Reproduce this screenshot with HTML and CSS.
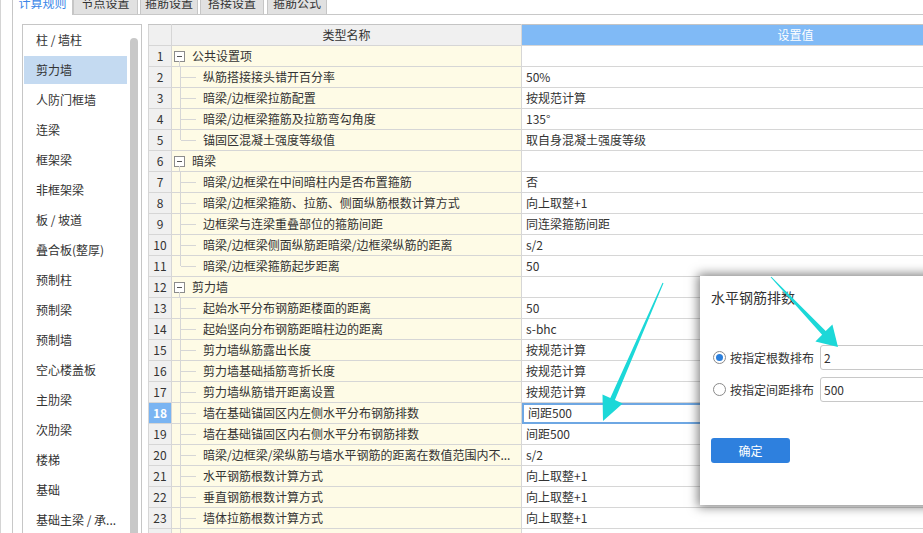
FILE: index.html
```html
<!DOCTYPE html>
<html lang="zh-CN">
<head>
<meta charset="utf-8">
<title>计算规则</title>
<link rel="stylesheet" href="styles.css">
</head>
<body>
<div class="app">
  <div class="tabs">
    <div class="tab active">计算规则</div>
    <div class="tab">节点设置</div>
    <div class="tab">箍筋设置</div>
    <div class="tab">搭接设置</div>
    <div class="tab">箍筋公式</div>
  </div>
  <div class="panel">
    <aside class="side">
      <ul class="side-list">
        <li class="side-item">柱 / 墙柱</li>
        <li class="side-item selected">剪力墙</li>
        <li class="side-item">人防门框墙</li>
        <li class="side-item">连梁</li>
        <li class="side-item">框架梁</li>
        <li class="side-item">非框架梁</li>
        <li class="side-item">板 / 坡道</li>
        <li class="side-item">叠合板(整厚)</li>
        <li class="side-item">预制柱</li>
        <li class="side-item">预制梁</li>
        <li class="side-item">预制墙</li>
        <li class="side-item">空心楼盖板</li>
        <li class="side-item">主肋梁</li>
        <li class="side-item">次肋梁</li>
        <li class="side-item">楼梯</li>
        <li class="side-item">基础</li>
        <li class="side-item">基础主梁 / 承...</li>
      </ul>
      <div class="side-scroll"><div class="thumb"></div></div>
    </aside>
    <div class="grid-wrap">
      <table class="grid">
        <colgroup><col class="c-num"><col class="c-name"><col class="c-val"></colgroup>
        <thead>
          <tr><th class="h-num"></th><th class="h-name">类型名称</th><th class="h-val">设置值</th></tr>
        </thead>
        <tbody>
          <tr><td class="num">1</td><td class="name"><div class="node"><span class="box"></span><span class="label">公共设置项</span></div></td><td class="val"></td></tr>
          <tr><td class="num">2</td><td class="name"><div class="node"><span class="branch"></span><span class="label">纵筋搭接接头错开百分率</span></div></td><td class="val">50%</td></tr>
          <tr><td class="num">3</td><td class="name"><div class="node"><span class="branch"></span><span class="label">暗梁/边框梁拉筋配置</span></div></td><td class="val">按规范计算</td></tr>
          <tr><td class="num">4</td><td class="name"><div class="node"><span class="branch"></span><span class="label">暗梁/边框梁箍筋及拉筋弯勾角度</span></div></td><td class="val">135°</td></tr>
          <tr><td class="num">5</td><td class="name"><div class="node"><span class="branch last"></span><span class="label">锚固区混凝土强度等级值</span></div></td><td class="val">取自身混凝土强度等级</td></tr>
          <tr><td class="num">6</td><td class="name"><div class="node"><span class="box"></span><span class="label">暗梁</span></div></td><td class="val"></td></tr>
          <tr><td class="num">7</td><td class="name"><div class="node"><span class="branch"></span><span class="label">暗梁/边框梁在中间暗柱内是否布置箍筋</span></div></td><td class="val">否</td></tr>
          <tr><td class="num">8</td><td class="name"><div class="node"><span class="branch"></span><span class="label">暗梁/边框梁箍筋、拉筋、侧面纵筋根数计算方式</span></div></td><td class="val">向上取整+1</td></tr>
          <tr><td class="num">9</td><td class="name"><div class="node"><span class="branch"></span><span class="label">边框梁与连梁重叠部位的箍筋间距</span></div></td><td class="val">同连梁箍筋间距</td></tr>
          <tr><td class="num">10</td><td class="name"><div class="node"><span class="branch"></span><span class="label">暗梁/边框梁侧面纵筋距暗梁/边框梁纵筋的距离</span></div></td><td class="val">s/2</td></tr>
          <tr><td class="num">11</td><td class="name"><div class="node"><span class="branch last"></span><span class="label">暗梁/边框梁箍筋起步距离</span></div></td><td class="val">50</td></tr>
          <tr><td class="num">12</td><td class="name"><div class="node"><span class="box"></span><span class="label">剪力墙</span></div></td><td class="val"></td></tr>
          <tr><td class="num">13</td><td class="name"><div class="node"><span class="branch"></span><span class="label">起始水平分布钢筋距楼面的距离</span></div></td><td class="val">50</td></tr>
          <tr><td class="num">14</td><td class="name"><div class="node"><span class="branch"></span><span class="label">起始竖向分布钢筋距暗柱边的距离</span></div></td><td class="val">s-bhc</td></tr>
          <tr><td class="num">15</td><td class="name"><div class="node"><span class="branch"></span><span class="label">剪力墙纵筋露出长度</span></div></td><td class="val">按规范计算</td></tr>
          <tr><td class="num">16</td><td class="name"><div class="node"><span class="branch"></span><span class="label">剪力墙基础插筋弯折长度</span></div></td><td class="val">按规范计算</td></tr>
          <tr><td class="num">17</td><td class="name"><div class="node"><span class="branch"></span><span class="label">剪力墙纵筋错开距离设置</span></div></td><td class="val">按规范计算</td></tr>
          <tr><td class="num current">18</td><td class="name"><div class="node"><span class="branch"></span><span class="label">墙在基础锚固区内左侧水平分布钢筋排数</span></div></td><td class="val editing">间距500</td></tr>
          <tr><td class="num">19</td><td class="name"><div class="node"><span class="branch"></span><span class="label">墙在基础锚固区内右侧水平分布钢筋排数</span></div></td><td class="val">间距500</td></tr>
          <tr><td class="num">20</td><td class="name"><div class="node"><span class="branch"></span><span class="label">暗梁/边框梁/梁纵筋与墙水平钢筋的距离在数值范围内不...</span></div></td><td class="val">s/2</td></tr>
          <tr><td class="num">21</td><td class="name"><div class="node"><span class="branch"></span><span class="label">水平钢筋根数计算方式</span></div></td><td class="val">向上取整+1</td></tr>
          <tr><td class="num">22</td><td class="name"><div class="node"><span class="branch"></span><span class="label">垂直钢筋根数计算方式</span></div></td><td class="val">向上取整+1</td></tr>
          <tr><td class="num">23</td><td class="name"><div class="node"><span class="branch"></span><span class="label">墙体拉筋根数计算方式</span></div></td><td class="val">向上取整+1</td></tr>
          <tr><td class="num"></td><td class="name"><div class="node"><span class="branch"></span><span class="label"></span></div></td><td class="val"></td></tr>
        </tbody>
      </table>
    </div>
  </div>

  <div class="dialog">
    <div class="dlg-title">水平钢筋排数</div>
    <div class="options">
      <div class="option">
        <span class="radio checked"></span>
        <span class="opt-label">按指定根数排布</span>
        <input class="field" type="text" value="2" readonly>
      </div>
      <div class="option">
        <span class="radio"></span>
        <span class="opt-label">按指定间距排布</span>
        <input class="field" type="text" value="500" readonly>
      </div>
    </div>
    <div class="btn">确定</div>
  </div>

  <svg class="arrows" width="923" height="533" viewBox="0 0 923 533">
    <polygon fill="#1cd8d8" points="662.5,282.8 610.3,398 602.5,394.6 603,421 622.7,403.4 614.9,400 663.5,283.2"/>
    <polygon fill="#1cd8d8" points="771.35,276.65 825.7,331.1 832.4,324.4 838,347 815.4,341.4 822.1,334.7 770.65,277.35"/>
  </svg>
</div>
</body>
</html>
```

FILE: styles.css
```css
html, body {
  margin: 0;
  padding: 0;
  height: 100%;
  overflow: hidden;
  background: #fff;
}

body {
  font-family: "Noto Sans CJK SC", "Microsoft YaHei", "Noto Sans", sans-serif;
  font-size: 12px;
  color: #333;
}

.app {
  position: relative;
  width: 923px;
  height: 533px;
  box-sizing: border-box;
  border-left: 1px solid #d4d4d4;
  overflow: hidden;
}

/* ---------- tabs ---------- */
.tabs {
  display: flex;
  align-items: flex-start;
  height: 14px;
  margin-left: 11px;
}

.tab {
  box-sizing: border-box;
  height: 22px;
  margin-top: -8px;
  line-height: 20px;
  text-align: center;
  border: 1px solid #c6c6c6;
  border-bottom: none;
  background: #e1e1e1;
  color: #333;
  white-space: nowrap;
}

.tab:nth-child(1) { width: 61px; }
.tab:nth-child(2) { width: 65px; }
.tab:nth-child(3) { width: 58px; margin-left: 2px; }
.tab:nth-child(4) { width: 64px; margin-left: 2px; }
.tab:nth-child(5) { width: 60px; margin-left: 3px; }

.tab.active {
  position: relative;
  z-index: 1;
  height: 23px;
  background: #fff;
  color: #3a86e8;
}

/* ---------- panel ---------- */
.panel {
  display: flex;
  align-items: flex-start;
  margin-left: 11px;
  height: 520px;
  box-sizing: border-box;
  border-left: 1px solid #c8c8c8;
  border-top: 1px solid #c8c8c8;
  padding: 9px 0 0 9px;
}

.side {
  flex: none;
  display: flex;
  width: 120px;
  height: 520px;
  box-sizing: border-box;
  border: 1px solid #c6c6c6;
  padding: 1px 0 0 1px;
}

.side-list {
  list-style: none;
  margin: 0;
  padding: 0;
  width: 103px;
}

.side-item {
  height: 28px;
  line-height: 28px;
  margin-bottom: 2px;
  padding-left: 12px;
  white-space: nowrap;
  overflow: hidden;
  color: #333;
}

.side-item.selected {
  background: #c4daf1;
}

.side-scroll {
  width: 8px;
  margin-left: 3px;
  padding-top: 12px;
}

.thumb {
  height: 560px;
  border-radius: 4px;
  background: #c8c8c8;
}

/* ---------- grid ---------- */
.grid-wrap {
  flex: none;
  margin-left: 6px;
}

.grid {
  border-collapse: collapse;
  table-layout: fixed;
  width: 921px;
}

.c-num { width: 23px; }
.c-name { width: 350px; }
.c-val { width: 548px; }

.grid th,
.grid td {
  padding: 0;
  border: 1px solid #d6d6d6;
  white-space: nowrap;
  overflow: hidden;
  line-height: 20px;
}

.grid thead tr { height: 20px; }
.grid tbody tr { height: 21px; }

.grid th {
  font-weight: normal;
  border-top-color: #c4c4c4;
}

.h-num, .h-name {
  background: #f0f0f0;
  color: #333;
}

.h-val {
  background: #80baf6;
  color: #fff;
  border-bottom-color: #68a8ee;
}

.num {
  background: #f0f0f0;
  text-align: center;
  color: #333;
}

.num.current {
  background: #7ab4f2;
  color: #fff;
  font-weight: bold;
}

.name {
  background: #fefbe6;
  color: #333;
}

.val {
  padding-left: 4px !important;
  background: #fff;
  color: #333;
}

.val.editing {
  outline: 2px solid #6ea7e3;
  outline-offset: -2px;
  padding-left: 6px !important;
}

.node {
  display: flex;
  align-items: center;
  height: 20px;
  padding-left: 8px;
}

.box {
  position: relative;
  flex: none;
  box-sizing: border-box;
  width: 11px;
  height: 11px;
  margin-left: -6px;
  margin-right: 7px;
  border: 1px solid #8c8c8c;
  background: #fff;
}

.box::before {
  content: "";
  position: absolute;
  left: 2px;
  top: 4px;
  width: 5px;
  border-top: 1px solid #555;
}

.box::after {
  content: "";
  position: absolute;
  left: 4px;
  top: 100%;
  height: 6px;
  border-left: 1px solid #d6d6d6;
}

.branch {
  position: relative;
  flex: none;
  align-self: stretch;
  width: 15px;
  margin-right: 7px;
  border-left: 1px solid #d6d6d6;
}

.branch.last {
  align-self: flex-start;
  height: 10px;
}

.branch::after {
  content: "";
  position: absolute;
  left: 0;
  top: 10px;
  width: 15px;
  border-top: 1px solid #d6d6d6;
}

.label {
  white-space: nowrap;
}

/* ---------- dialog ---------- */
.dialog {
  position: absolute;
  left: 699px;
  top: 276px;
  width: 240px;
  height: 229px;
  box-sizing: border-box;
  padding: 11px 0 0 11px;
  background: #fff;
  box-shadow: 0 0 10px 2px rgba(0, 0, 0, 0.5);
}

.dlg-title {
  font-size: 14px;
  line-height: 20px;
  color: #333;
}

.options {
  display: flex;
  flex-direction: column;
  gap: 7px;
  margin-top: 38px;
}

.option {
  display: flex;
  align-items: center;
  height: 25px;
}

.radio {
  position: relative;
  flex: none;
  box-sizing: border-box;
  width: 13px;
  height: 13px;
  margin-left: 2px;
  border: 1px solid #8a8a8a;
  border-radius: 50%;
  background: #fff;
}

.radio.checked::after {
  content: "";
  position: absolute;
  left: 2px;
  top: 2px;
  width: 7px;
  height: 7px;
  border-radius: 50%;
  background: #2b7fdc;
}

.opt-label {
  flex: none;
  margin-left: 4px;
  width: 90px;
  color: #333;
  white-space: nowrap;
}

.field {
  flex: none;
  box-sizing: border-box;
  width: 130px;
  height: 25px;
  margin: 0;
  padding: 0 0 0 3px;
  border: 1px solid #c8c8c8;
  border-radius: 3px;
  font-family: inherit;
  font-size: 12px;
  color: #333;
  outline: none;
}

.btn {
  width: 79px;
  height: 25px;
  margin-top: 36px;
  border-radius: 3px;
  background: #2e80de;
  color: #fff;
  text-align: center;
  line-height: 25px;
}

/* ---------- annotation arrows ---------- */
.arrows {
  position: absolute;
  left: -1px;
  top: 0;
  pointer-events: none;
}
```
